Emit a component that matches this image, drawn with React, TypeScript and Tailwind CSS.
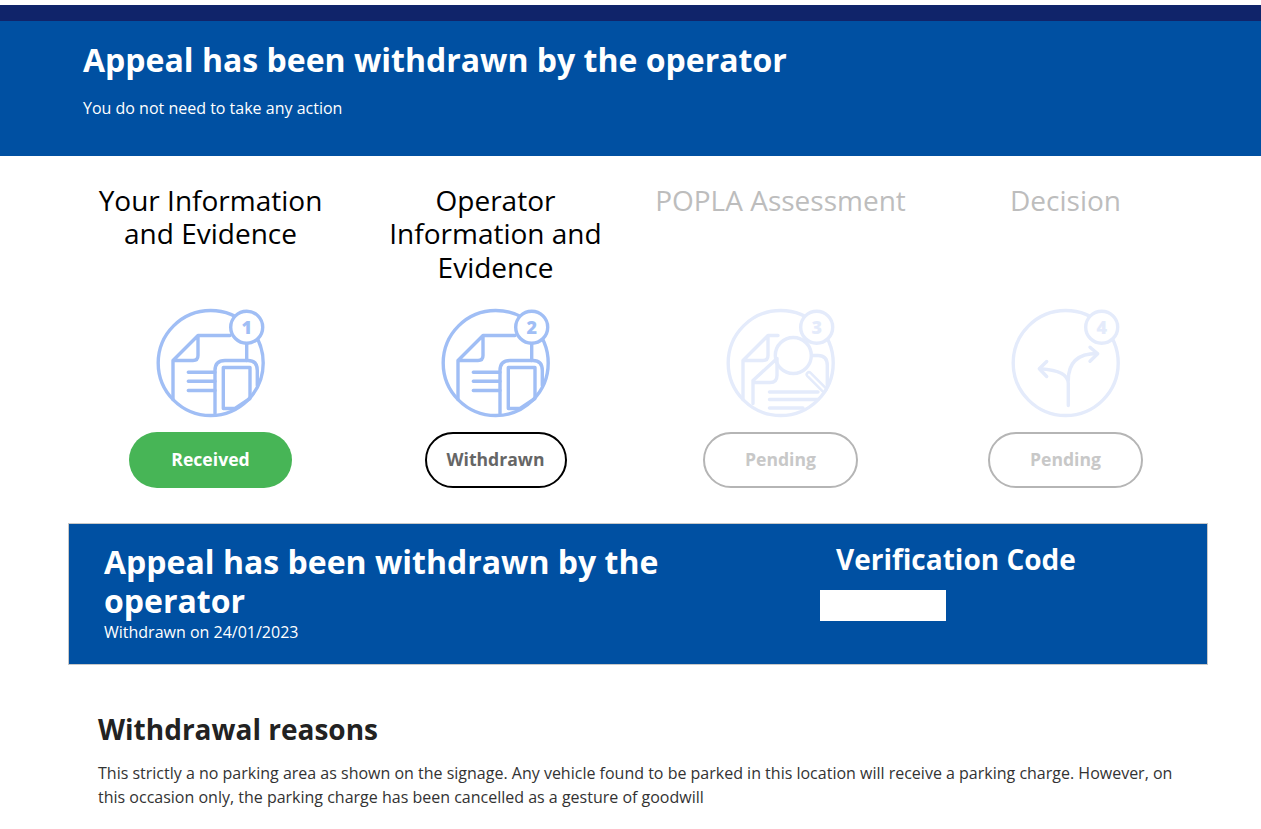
import type { ReactNode } from 'react';

type StepProps = {
    title: ReactNode;
    faded?: boolean;
    number: string;
    art: ReactNode;
    pill: ReactNode;
};

function StepIcon({ number, faded, children }: { number: string; faded?: boolean; children: ReactNode }) {
    const colour = faded ? '#e4ebfb' : '#a0bef5';
    return (
        <svg width="140" height="130" viewBox="1 -0.5 140 130" fill="none" stroke={colour} strokeWidth="3.4" strokeLinecap="round" strokeLinejoin="round">
            {children}
            <circle cx="70.7" cy="67.5" r="52.5" />
            <circle cx="106.7" cy="31.7" r="16" fill="#fff" />
            <text x="106.7" y="38" textAnchor="middle" fontSize="18" fontWeight="800" fill={colour} stroke="none" fontFamily="'Open Sans', sans-serif">
                {number}
            </text>
        </svg>
    );
}

const documentArt = (
    <>
        <path d="M33 104V65L58 40H90M58 40V60Q58 65 53 65H33M106.7 48V65" />
        <path d="M75 118V75Q75 65 85 65H108Q117.3 65 117.3 75V90" />
        <path d="M83.3 113V72H110V103L95 113Z" />
        <path d="M48.3 76.7H75M48.3 85.7H75M48.3 95H75" />
    </>
);

const searchArt = (
    <>
        <path d="M33 104V65L58 40H68M58 40V60Q58 65 53 65H33" />
        <path d="M43 108V85L67 63V80Q67 87 60 87H43" />
        <path d="M102 60H108Q117.3 60 117.3 70V90" />
        <circle cx="83.3" cy="60" r="18" />
        <path d="M99 79L114 94" strokeWidth="7" />
        <path d="M99 79L114 94" stroke="#fff" strokeWidth="2" />
        <path d="M59.5 96.5H108M59.5 104H108M59.5 112.5H93" />
    </>
);

const decisionArt = (
    <>
        <path d="M73.3 110V88Q73.3 75 45 73.3" />
        <path d="M51.7 66L44.3 73.3L51.7 81" />
        <path d="M73.3 85Q73.3 58 102 58" />
        <path d="M95 51.7L102.7 58.3L95 65.7" />
    </>
);

function Step({ title, faded, number, art, pill }: StepProps) {
    return (
        <div className="flex flex-col items-center">
            <h3 className={`h-[101px] w-[255px] text-center text-[28px] leading-[33.4px] ${faded ? 'text-[#bdbdbd]' : 'text-black'}`}>
                {title}
            </h3>
            <div className="mt-[10px] h-[130px]">
                <StepIcon number={number} faded={faded}>
                    {art}
                </StepIcon>
            </div>
            <div className="mt-[7px]">{pill}</div>
        </div>
    );
}

function Pill({ className, children }: { className: string; children: ReactNode }) {
    return (
        <span className={`flex h-[56px] items-center justify-center rounded-full pb-[2px] text-[17.6px] font-bold ${className}`}>
            {children}
        </span>
    );
}

export default function App() {
    return (
        <div className="min-h-[829px] overflow-hidden bg-white pt-[5px] font-['Open_Sans',sans-serif]">
            <div className="h-[16px] bg-[#10246a]" />
            <div className="h-[135px] bg-[#0050a2] pl-[83px] pt-[17px] text-white">
                <h1 className="text-[32px] font-bold leading-[44px]">Appeal has been withdrawn by the operator</h1>
                <p className="mt-[15px] text-[16px] leading-[22px]">You do not need to take any action</p>
            </div>

            <div className="mx-[68px] mt-[28px] grid w-[1140px] grid-cols-4 gap-0">
                <Step
                    title={<>Your Information and Evidence</>}
                    number="1"
                    art={documentArt}
                    pill={<Pill className="w-[163px] bg-[#47b556] text-white">Received</Pill>}
                />
                <Step
                    title={<>Operator Information and Evidence</>}
                    number="2"
                    art={documentArt}
                    pill={<Pill className="w-[142px] border-2 border-black bg-white text-[#666]">Withdrawn</Pill>}
                />
                <Step
                    title="POPLA Assessment"
                    faded
                    number="3"
                    art={searchArt}
                    pill={<Pill className="w-[155px] border-2 border-[#b5b5b5] bg-white text-[#c8c8c8]">Pending</Pill>}
                />
                <Step
                    title="Decision"
                    faded
                    number="4"
                    art={decisionArt}
                    pill={<Pill className="w-[155px] border-2 border-[#b5b5b5] bg-white text-[#c8c8c8]">Pending</Pill>}
                />
            </div>

            <div className="ml-[68px] mt-[35px] flex h-[142px] w-[1140px] border border-[#c8c8c8] bg-[#0050a2] text-white">
                <div className="w-[700px] pl-[35px] pt-[18px]">
                    <h2 className="w-[600px] text-[32px] font-bold leading-[39px]">Appeal has been withdrawn by the operator</h2>
                    <p className="mt-[1px] text-[16px] leading-[22px]">Withdrawn on 24/01/2023</p>
                </div>
                <div className="pl-[51px] pt-[16px]">
                    <h3 className="pl-[16px] text-[28px] font-bold leading-[38px]">Verification Code</h3>
                    <div className="mt-[12px] h-[31px] w-[126px] bg-white" />
                </div>
            </div>

            <div className="ml-[98px] mt-[45px] w-[1090px] text-[#222]">
                <h2 className="text-[28px] font-bold leading-[38px]">Withdrawal reasons</h2>
                <p className="mt-[13px] text-[16px] leading-[24px] text-[#333]">
                    This strictly a no parking area as shown on the signage. Any vehicle found to be parked in this location will receive a parking charge. However, on this occasion only, the parking charge has been cancelled as a gesture of goodwill
                </p>
            </div>
        </div>
    );
}
